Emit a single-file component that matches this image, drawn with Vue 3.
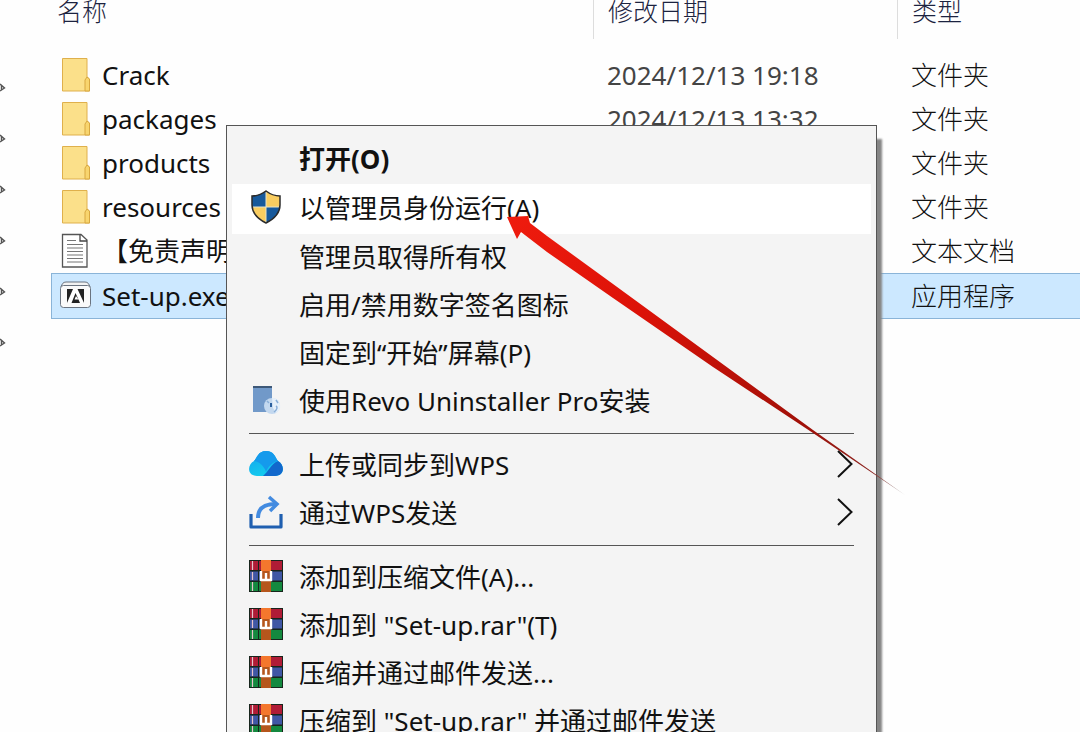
<template>
  <div class="explorer">
    <aside class="quick-access">
      <svg v-for="n in 6" :key="n" class="pin" width="8" height="14" viewBox="0 0 8 14">
        <path d="M0 3 L4.500 7 L0 10 M1.500 4.500 V9.500" fill="none" stroke="#555" stroke-width="1.400" />
      </svg>
    </aside>

    <main class="file-pane">
      <table class="file-table">
        <colgroup>
          <col class="col-name" />
          <col class="col-date" />
          <col />
        </colgroup>
        <thead>
          <tr>
            <th scope="col">名称</th>
            <th scope="col">修改日期</th>
            <th scope="col">类型</th>
          </tr>
        </thead>
        <tbody>
          <tr v-for="file in files" :key="file.name" :class="{ selected: file.selected }">
            <td>
              <div class="file-name">
                <svg v-if="file.icon === 'folder'" class="file-icon" viewBox="0 0 34 36">
                  <path d="M3.5 1.5 H28 V20 L30.5 22 V34 H3.5 Z" fill="#fbe08a" stroke="#dfb04c" />
                  <path d="M26 34 V23 L28 20 L30.5 22 V34 Z" fill="#f8d56e" stroke="#d8a840" />
                </svg>
                <svg v-else-if="file.icon === 'text'" class="file-icon" viewBox="0 0 34 36">
                  <path d="M3.5 1.5 H22 L28 7 V34 H3.5 Z" fill="#fff" stroke="#555" stroke-width="1.300" />
                  <path d="M21 1.5 V8 H28" fill="none" stroke="#444" stroke-width="1.300" />
                  <path d="M8 7.5 H17 M8 11.5 H24 M8 15 H24 M8 18.5 H24 M8 22 H24 M8 25.5 H24 M8 29 H24" stroke="#777" stroke-width="1.200" />
                </svg>
                <svg v-else class="file-icon" viewBox="0 0 34 36">
                  <path d="M2 9 C3 6 4 4 7 4 H26 C29 4 30 6 31 9" fill="#f2f2f2" stroke="#6b7480" />
                  <rect x="1.500" y="7.500" width="30" height="22" rx="3" fill="#fafafa" stroke="#6b7480" />
                  <rect x="8" y="11" width="17" height="14" fill="#222" />
                  <path d="M14 11 H18.500 L25 25 H21 L19.500 21.500 H15.500 L17 18 L19.500 21.500 L16.500 15 L12.500 25 H8 Z" fill="#fff" />
                </svg>
                <span>{{ file.name }}</span>
              </div>
            </td>
            <td class="date">{{ file.date }}</td>
            <td>{{ file.type }}</td>
          </tr>
        </tbody>
      </table>
    </main>

    <div class="context-menu" role="menu">
      <template v-for="(group, index) in menuGroups" :key="index">
        <hr v-if="index > 0" class="separator" />
        <button
          v-for="item in group"
          :key="item.label"
          type="button"
          role="menuitem"
          class="menu-item"
          :class="{ active: item.active, default: item.isDefault }"
        >
          <span class="menu-icon">
            <svg v-if="item.icon === 'shield'" width="34" height="34" viewBox="0 0 34 34">
              <path d="M17 1 C21 4 26 6 31 6 V15 C31 24 25 29 17 33 C9 29 3 24 3 15 V6 C8 6 13 4 17 1 Z" fill="#f9cd60" />
              <path d="M17 1 C13 4 8 6 3 6 V17 H17 Z M17 17 H31 C30 24 25 29 17 33 Z" fill="#17599b" />
              <path d="M17 2 V32 M3 17 H31" stroke="#e8e3c8" stroke-width="1" />
              <path d="M17 1 C21 4 26 6 31 6 V15 C31 24 25 29 17 33 C9 29 3 24 3 15 V6 C8 6 13 4 17 1 Z" fill="none" stroke="#2b2b2b" stroke-width="1.500" />
            </svg>
            <svg v-else-if="item.icon === 'revo'" width="34" height="34" viewBox="0 0 34 34">
              <rect x="4" y="3" width="19" height="26" fill="#7199c9" />
              <path d="M4 4 H23" stroke="#3d5878" stroke-width="2" />
              <circle cx="23" cy="23" r="8" fill="#c3d8ef" />
              <path d="M23 15 A8 8 0 0 1 27 30 L24 25 Z" fill="#e6f0fa" />
              <path d="M18 18 L20 20 M27 17 L29 20 M27 23 C29 24 28 27 25 29" fill="none" stroke="#89aed8" stroke-width="1.500" />
              <path d="M22 20 V24" stroke="#2b5f9e" stroke-width="2" />
            </svg>
            <svg v-else-if="item.icon === 'cloud'" width="34" height="34" viewBox="0 0 34 34">
              <defs>
                <linearGradient id="cloud-left" x1="0" y1="0" x2="0.600" y2="1">
                  <stop offset="0" stop-color="#16a0ee" />
                  <stop offset="1" stop-color="#12d0ee" />
                </linearGradient>
              </defs>
              <path d="M8 29 C-2 29 -2 18 5 14 C8 11 9 4 17 4 C25 4 26 10 29 14 C36 18 36 29 26 29 Z" fill="url(#cloud-left)" />
              <path d="M14 29 C19 25 22 17 29 14 C36 18 36 29 26 29 Z" fill="#1268cc" />
              <path d="M5 14 C8 11 9 4 17 4 C25 4 26 10 29 14 C22 16 19 20 17 25 C15 19 11 15 5 14 Z" fill="#159aec" />
            </svg>
            <svg v-else-if="item.icon === 'share'" width="34" height="34" viewBox="0 0 34 34">
              <path d="M2 19 V32 H32 V19" fill="none" stroke="#1f5fb0" stroke-width="3.200" stroke-linejoin="round" />
              <path d="M9 23 C9 14 14 9 27 9" fill="none" stroke="#438be0" stroke-width="4" />
              <path d="M20 2 L28 9 L21 16" fill="none" stroke="#438be0" stroke-width="3.500" />
            </svg>
            <svg v-else-if="item.icon === 'rar'" width="34" height="32" viewBox="0 0 34 32">
              <rect width="34" height="32" fill="#17251c" />
              <path d="M1 1 H33 V10 H1 Z" fill="#b01c36" />
              <path d="M1 11.500 H33 V20.500 H1 Z" fill="#4057a5" />
              <path d="M1 22 H33 V31 H1 Z" fill="#14893f" />
              <path d="M3.500 1 V10 M3.500 12 V20 M3.500 22 V31" stroke="#e8c4cc" stroke-width="1.200" />
              <path d="M9.500 1 V31" stroke="#17251c" stroke-width="1" />
              <rect x="12" width="10" height="32" fill="#b5561c" />
              <rect x="12" width="10" height="11" fill="#f4772d" />
              <path d="M12 11 V20 H22 V11 M17 13 V20" fill="none" stroke="#fff" stroke-width="2.400" />
            </svg>
          </span>
          <span class="menu-label">{{ item.label }}</span>
          <svg v-if="item.submenu" class="chevron" width="16" height="28" viewBox="0 0 16 28">
            <path d="M1 1 L14.500 14 L1 27" fill="none" stroke="#111" stroke-width="2" />
          </svg>
        </button>
      </template>
    </div>

    <svg class="pointer" width="410" height="290" viewBox="0 0 410 290">
      <defs>
        <linearGradient id="pointer-fill" gradientUnits="userSpaceOnUse" x1="0" y1="0" x2="405" y2="285">
          <stop offset="0" stop-color="#f01c0e" />
          <stop offset="0.350" stop-color="#dc1208" />
          <stop offset="0.750" stop-color="#a01008" />
          <stop offset="0.920" stop-color="#8b2520" />
          <stop offset="1" stop-color="#999" />
        </linearGradient>
      </defs>
      <path d="M7 7 L28 6 L30 13 L47 26 L113 74 L213 147 L313 220 L405 285 L313 223 L213 157 L113 88 L47 42 L21 22 L17 29 Z" fill="url(#pointer-fill)" />
    </svg>
  </div>
</template>

<script setup>
const files = [
  { name: 'Crack', icon: 'folder', date: '2024/12/13 19:18', type: '文件夹' },
  { name: 'packages', icon: 'folder', date: '2024/12/13 13:32', type: '文件夹' },
  { name: 'products', icon: 'folder', type: '文件夹' },
  { name: 'resources', icon: 'folder', type: '文件夹' },
  { name: '【免责声明', icon: 'text', type: '文本文档' },
  { name: 'Set-up.exe', icon: 'setup', type: '应用程序', selected: true }
];

const menuGroups = [
  [
    { label: '打开(O)', isDefault: true },
    { label: '以管理员身份运行(A)', icon: 'shield', active: true },
    { label: '管理员取得所有权' },
    { label: '启用/禁用数字签名图标' },
    { label: '固定到“开始”屏幕(P)' },
    { label: '使用Revo Uninstaller Pro安装', icon: 'revo' }
  ],
  [
    { label: '上传或同步到WPS', icon: 'cloud', submenu: true },
    { label: '通过WPS发送', icon: 'share', submenu: true }
  ],
  [
    { label: '添加到压缩文件(A)...', icon: 'rar' },
    { label: '添加到 "Set-up.rar"(T)', icon: 'rar' },
    { label: '压缩并通过邮件发送...', icon: 'rar' },
    { label: '压缩到 "Set-up.rar" 并通过邮件发送', icon: 'rar' }
  ]
];
</script>

<style>
body {
  margin: 0;
  background-color: #fefefe;
}
</style>

<style scoped>
.explorer {
  position: relative;
  display: flex;
  height: 100vh;
  overflow: hidden;
  font-family: "Noto Sans", "Noto Sans CJK SC", sans-serif;
  font-size: 26px;
  color: #111;
}

.quick-access {
  width: 51px;
  flex-shrink: 0;
  display: flex;
  flex-direction: column;
  gap: 37px;
  padding-top: 81px;
  box-sizing: border-box;
}

.pin {
  flex-shrink: 0;
}

.file-pane {
  flex: 1;
  min-width: 0;
}

.file-table {
  width: 100%;
  table-layout: fixed;
  border-collapse: separate;
  border-spacing: 0;
}

.col-name {
  width: 542px;
}

.col-date {
  width: 304px;
}

.file-table th {
  height: 39px;
  padding: 0 0 0 14px;
  font-size: 25px;
  font-weight: 300;
  line-height: 22px;
  text-align: left;
  vertical-align: top;
  color: #1c2340;
}

.file-table th:first-child {
  padding-left: 6px;
}

.file-table th + th {
  border-left: 1px solid #ddd;
}

.file-table tbody::before {
  content: "";
  display: block;
  height: 14px;
}

.file-table td {
  height: 44px;
  padding: 0 0 0 14px;
  line-height: 44px;
  white-space: nowrap;
  font-weight: 300;
  color: #111;
}

.file-table td.date {
  font-weight: 400;
  color: #444;
}

.file-table td:first-child {
  padding-left: 8px;
  font-weight: 400;
}

.file-name {
  display: flex;
  align-items: center;
  gap: 9px;
}

.file-icon {
  width: 34px;
  height: 36px;
  flex-shrink: 0;
}

.selected td {
  background-color: #cce8ff;
  border-top: 1px solid #8ab4d8;
  border-bottom: 1px solid #8ab4d8;
}

.selected td:first-child {
  border-left: 1px solid #8ab4d8;
  padding-left: 7px;
}

.context-menu {
  position: absolute;
  top: 125px;
  left: 226px;
  width: 651px;
  box-sizing: border-box;
  padding: 10px 5px;
  background-color: #f4f4f4;
  border: 1px solid #555;
  box-shadow: 5px 14px 2px #858585;
}

.menu-item {
  display: flex;
  align-items: center;
  gap: 16px;
  width: 100%;
  height: 48px;
  padding: 0 18px 4px 17px;
  border: none;
  background: none;
  font-family: inherit;
  font-size: 26px;
  color: #111;
  text-align: left;
  white-space: nowrap;
}

.menu-item.active {
  height: 50px;
  background-color: #fff;
}

.menu-item.default {
  font-weight: 700;
}

.menu-icon {
  display: flex;
  width: 34px;
  flex-shrink: 0;
}

.menu-label {
  flex: 1;
}

.separator {
  height: 1px;
  margin: 7px 17px 8px;
  border: none;
  background-color: #555;
}

.chevron {
  flex-shrink: 0;
}

.pointer {
  position: absolute;
  top: 210px;
  left: 500px;
  pointer-events: none;
}
</style>
